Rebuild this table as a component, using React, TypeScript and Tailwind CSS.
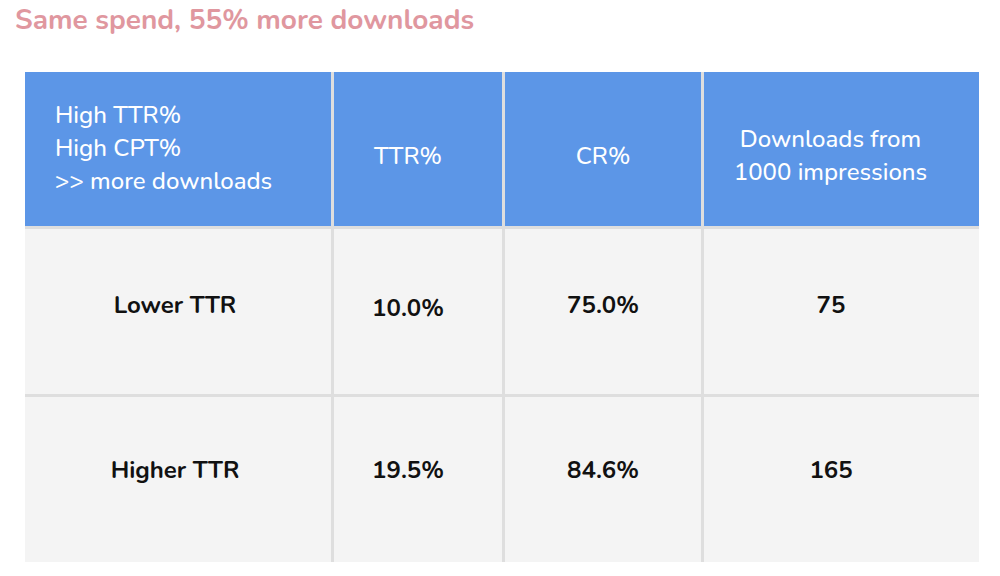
import React from "react";

const font = { fontFamily: '"Nunito", "Noto Sans", "Open Sans", sans-serif' };

export default function App() {
  const cell = "bg-[#f4f4f4] text-[#111] text-[24px] font-bold flex items-center justify-center";
  return (
    <div className="w-[1000px] h-[576px] bg-white overflow-hidden" style={font}>
      <div className="pl-[15px] pt-[2px] h-[72px] text-[28px] font-bold text-[#e0979f] leading-[36px]">
        Same spend, 55% more downloads
      </div>
      <div className="ml-[25px] w-[954px] grid grid-cols-[306px_168px_196px_275px] grid-rows-[154px_165px_165px] gap-x-[3px] gap-y-[3px] bg-[#dedede]">
        <div className="bg-[#5c96e7] text-white text-[24px] font-medium leading-[33px] pl-[30px] flex flex-col justify-center pb-[2px]">
          <span>High TTR%</span>
          <span>High CPT%</span>
          <span>&gt;&gt; more downloads</span>
        </div>
        <div className="bg-[#5c96e7] text-white text-[24px] font-medium flex items-center justify-center pr-[20px] pt-[14px]">
          TTR%
        </div>
        <div className="bg-[#5c96e7] text-white text-[24px] font-medium flex items-center justify-center pt-[14px]">
          CR%
        </div>
        <div className="bg-[#5c96e7] text-white text-[24px] font-medium leading-[33px] flex flex-col items-center justify-center pr-[22px] pt-[14px]">
          <span>Downloads from</span>
          <span>1000 impressions</span>
        </div>

        <div className={`${cell} pr-[6px] pb-[14px]`}>Lower TTR</div>
        <div className={`${cell} pr-[20px] pb-[7px]`}>10.0%</div>
        <div className={`${cell} pb-[14px]`}>75.0%</div>
        <div className={`${cell} pr-[21px] pb-[14px]`}>75</div>

        <div className={`${cell} pr-[6px] pb-[19px]`}>Higher TTR</div>
        <div className={`${cell} pr-[20px] pb-[19px]`}>19.5%</div>
        <div className={`${cell} pb-[19px]`}>84.6%</div>
        <div className={`${cell} pr-[21px] pb-[19px]`}>165</div>
      </div>
    </div>
  );
}
